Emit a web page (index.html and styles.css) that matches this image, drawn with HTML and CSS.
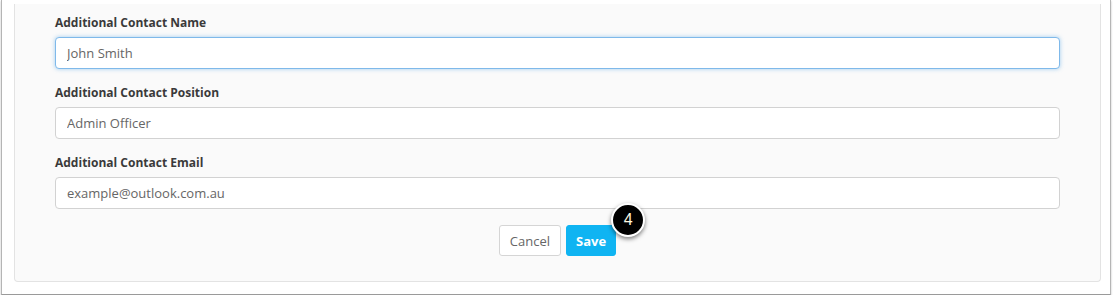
FILE: index.html
```html
<!DOCTYPE html>
<html lang="en">
<head>
    <meta charset="UTF-8">
    <title>Additional Contact</title>
    <link rel="stylesheet" href="styles.css">
</head>
<body>

<div class="frame">
    <div class="panel">
        <div class="field">
            <label class="label">Additional Contact Name</label>
            <input type="text" class="input focused" value="John Smith">
        </div>
        <div class="field">
            <label class="label">Additional Contact Position</label>
            <input type="text" class="input" value="Admin Officer">
        </div>
        <div class="field">
            <label class="label">Additional Contact Email</label>
            <input type="text" class="input" value="example@outlook.com.au">
        </div>
        <div class="actions">
            <button class="btn cancel">Cancel</button>
            <div class="save-wrap">
                <button class="btn save">Save</button>
                <span class="badge">4</span>
            </div>
        </div>
    </div>
</div>

</body>
</html>
```

FILE: styles.css
```css
body {
    margin: 0;
    background-color: #ffffff;
    font-family: 'Open Sans', 'Noto Sans', sans-serif;
}
.frame {
    margin-left: 1px;
    width: 1110px;
    height: 295px;
    border-left: 1px solid #b5b5b5;
    border-right: 1px solid #b5b5b5;
    border-bottom: 1px solid #9a9a9a;
    box-shadow: 0 1px 2px rgba(0, 0, 0, 0.25);
    padding-top: 4px;
    box-sizing: border-box;
}
.panel {
    margin: 0 9px 0 12px;
    background-color: #fafafa;
    border: 1px solid #e3e3e3;
    border-top: none;
    border-radius: 0 0 4px 4px;
    padding: 10px 40px 24px 40px;
    height: 278px;
    box-sizing: border-box;
}
.field {
    margin-bottom: 15px;
}
.label {
    display: block;
    font-size: 12px;
    font-weight: bold;
    color: #3a3a3a;
    line-height: 17px;
    margin-bottom: 6px;
}
.input {
    display: block;
    width: 100%;
    height: 32px;
    box-sizing: border-box;
    border: 1px solid #d2d2d2;
    border-radius: 4px;
    background-color: #ffffff;
    padding: 0 11px;
    font-family: 'Open Sans', 'Noto Sans', sans-serif;
    font-size: 13px;
    color: #666666;
    outline: none;
}
.focused {
    border-color: #7fb9ea;
    box-shadow: 0 0 4px rgba(102, 175, 233, 0.6);
}
.actions {
    display: flex;
    justify-content: center;
    gap: 5px;
    padding-top: 1px;
}
.btn {
    height: 31px;
    border-radius: 3px;
    font-family: 'Open Sans', 'Noto Sans', sans-serif;
    font-size: 13px;
    padding: 0 10px;
    cursor: pointer;
}
.cancel {
    background-color: #ffffff;
    border: 1px solid #d5d5d5;
    color: #666666;
}
.save {
    background-color: #0fb4f2;
    border: 1px solid #0fb4f2;
    color: #ffffff;
    font-weight: bold;
    padding: 0 9px;
}
.save-wrap {
    position: relative;
}
.badge {
    position: absolute;
    right: -29px;
    top: -22px;
    width: 30px;
    height: 30px;
    border-radius: 50%;
    background-color: #000000;
    border: 2px solid #ffffff;
    box-shadow: 0 2px 4px rgba(0, 0, 0, 0.5);
    color: #fff8e0;
    font-family: 'Liberation Sans', sans-serif;
    font-size: 16px;
    line-height: 30px;
    text-align: center;
}
```
